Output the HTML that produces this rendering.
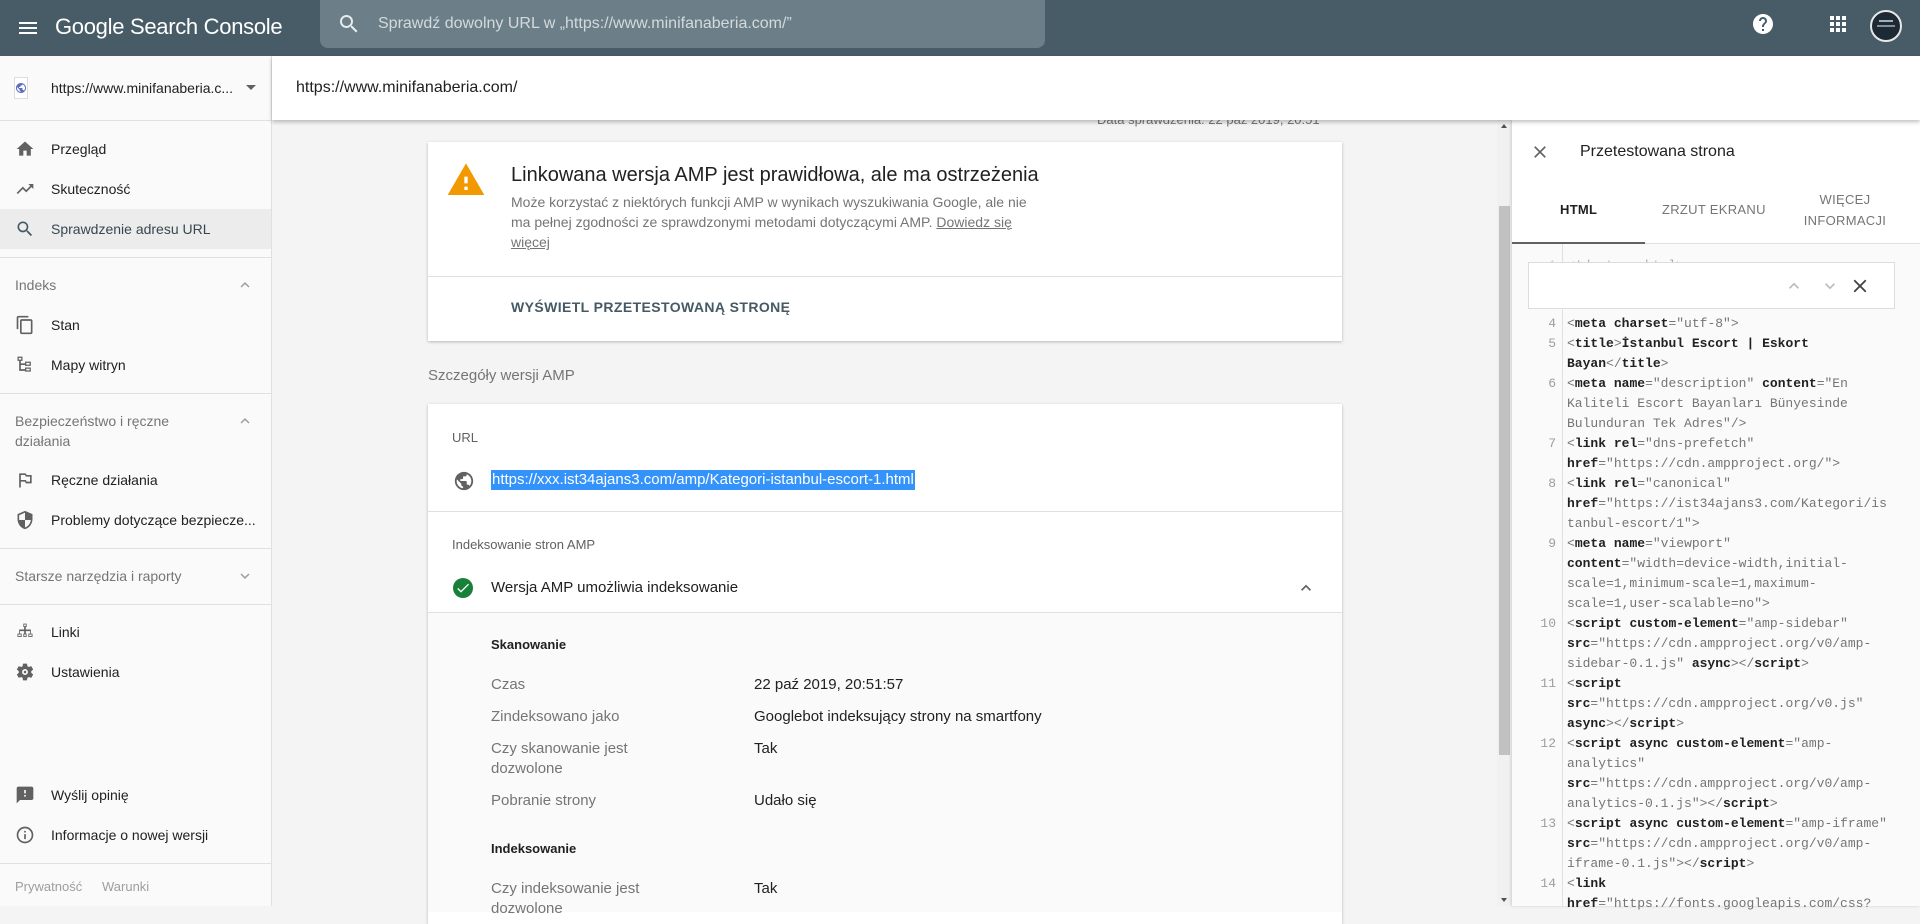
<!DOCTYPE html>
<html><head><meta charset="utf-8"><style>
*{margin:0;padding:0;box-sizing:border-box}
body{width:1920px;height:906px;overflow:hidden;position:relative;background:#f4f4f4;font-family:"Liberation Sans",Arial,sans-serif;color:#212121}
.a{position:absolute}
.t{position:absolute;white-space:nowrap;line-height:20px}
svg.i{position:absolute;width:20px;height:20px;fill:#616161}
.nav{font-size:14px;color:#212121;left:51px}
.div{position:absolute;left:0;width:271px;height:1px;background:#e0e0e0}
.code{position:absolute;left:1567px;font-family:"Liberation Mono",monospace;font-size:13px;color:#757575;white-space:pre;line-height:20px}
.code b{color:#212121}
.ln{position:absolute;left:1530px;width:26px;text-align:right;font-family:"Liberation Mono",monospace;font-size:13px;color:#9e9e9e;line-height:20px}
.lbl{color:#757575;font-size:15px;left:491px}
.val{color:#212121;font-size:15px;left:754px}
</style></head><body>

<!-- top bar -->
<div class="a" style="left:0;top:0;width:1920px;height:56px;background:#485c67"></div>
<svg class="i" viewBox="0 0 24 24" style="left:16px;top:16px;width:24px;height:24px;fill:#fff"><path d="M3 18h18v-2H3v2zm0-5h18v-2H3v2zm0-7v2h18V6H3z"/></svg>
<div class="t" style="left:55px;top:13px;font-size:22px;line-height:28px;color:#fff;letter-spacing:-0.3px">Google Search Console</div>
<div class="a" style="left:320px;top:0;width:725px;height:48px;background:#6c7f89;border-radius:0 0 8px 8px"></div>
<svg class="i" viewBox="0 0 24 24" style="left:337px;top:12px;width:24px;height:24px;fill:#e8ecee"><path d="M15.5 14h-.79l-.28-.27A6.471 6.471 0 0 0 16 9.5 6.5 6.5 0 1 0 9.5 16c1.61 0 3.09-.59 4.23-1.57l.27.28v.79l5 4.99L20.49 19l-4.99-5zm-6 0C7.01 14 5 11.99 5 9.5S7.01 5 9.5 5 14 7.01 14 9.5 11.99 14 9.5 14z"/></svg>
<div class="t" style="left:378px;top:14px;font-size:16px;color:#d3dadd">Sprawdź dowolny URL w „https://www.minifanaberia.com/”</div>
<svg class="i" viewBox="0 0 24 24" style="left:1751px;top:12px;width:24px;height:24px;fill:#fff"><path d="M12 2C6.48 2 2 6.48 2 12s4.48 10 10 10 10-4.48 10-10S17.52 2 12 2zm1 17h-2v-2h2v2zm2.07-7.75l-.9.92C13.45 12.9 13 13.5 13 15h-2v-.5c0-1.1.45-2.1 1.17-2.83l1.24-1.26c.37-.36.59-.86.59-1.41 0-1.1-.9-2-2-2s-2 .9-2 2H8c0-2.21 1.79-4 4-4s4 1.79 4 4c0 .88-.36 1.68-.93 2.25z"/></svg>
<svg class="i" viewBox="0 0 24 24" style="left:1826px;top:12px;width:24px;height:24px;fill:#fff"><path d="M4 8h4V4H4v4zm6 12h4v-4h-4v4zm-6 0h4v-4H4v4zm0-6h4v-4H4v4zm6 0h4v-4h-4v4zm6-10v4h4V4h-4zm-6 4h4V4h-4v4zm6 6h4v-4h-4v4zm0 6h4v-4h-4v4z"/></svg>
<div class="a" style="left:1870px;top:10px;width:32px;height:32px;border-radius:50%;background:#1d2a35;border:2px solid #e8e8e8"></div>
<div class="a" style="left:1879px;top:20px;width:14px;height:2px;background:#9fb0b8"></div>
<div class="a" style="left:1877px;top:25px;width:18px;height:2px;background:#7f9099"></div>

<!-- sidebar -->
<div class="a" style="left:0;top:56px;width:272px;height:850px;background:#fafafa;border-right:1px solid #e0e0e0"></div>
<div class="a" style="left:14px;top:77px;width:14px;height:22px;border:1px solid #ddd;background:#fff"></div>
<svg class="a" viewBox="0 0 24 24" style="left:15px;top:82px;width:12px;height:12px;fill:#5c6bc0"><path d="M12 2C6.48 2 2 6.48 2 12s4.48 10 10 10 10-4.48 10-10S17.52 2 12 2zm-1 17.93c-3.95-.49-7-3.85-7-7.93 0-.62.08-1.21.21-1.79L9 15v1c0 1.1.9 2 2 2v1.93zm6.9-2.54c-.26-.81-1-1.39-1.9-1.39h-1v-3c0-.55-.45-1-1-1H8v-2h2c.55 0 1-.45 1-1V7h2c1.1 0 2-.9 2-2v-.41c2.93 1.19 5 4.06 5 7.41 0 2.08-.8 3.97-2.1 5.39z"/></svg>
<div class="t nav" style="top:78px;font-size:14px">https://www.minifanaberia.c...</div>
<div class="a" style="left:246px;top:85px;width:0;height:0;border-left:5px solid transparent;border-right:5px solid transparent;border-top:5px solid #616161"></div>
<div class="div" style="top:120px"></div>

<svg class="i" viewBox="0 0 24 24" style="left:15px;top:139px"><path d="M10 20v-6h4v6h5v-8h3L12 3 2 12h3v8z"/></svg>
<div class="t nav" style="top:139px">Przegląd</div>
<svg class="i" viewBox="0 0 24 24" style="left:15px;top:179px"><path d="M16 6l2.29 2.29-4.88 4.88-4-4L2 16.59 3.41 18l6-6 4 4 6.3-6.29L22 12V6z"/></svg>
<div class="t nav" style="top:179px">Skuteczność</div>
<div class="a" style="left:0;top:209px;width:271px;height:40px;background:#ececec"></div>
<svg class="i" viewBox="0 0 24 24" style="left:15px;top:219px;fill:#455a64"><path d="M15.5 14h-.79l-.28-.27A6.471 6.471 0 0 0 16 9.5 6.5 6.5 0 1 0 9.5 16c1.61 0 3.09-.59 4.23-1.57l.27.28v.79l5 4.99L20.49 19l-4.99-5zm-6 0C7.01 14 5 11.99 5 9.5S7.01 5 9.5 5 14 7.01 14 9.5 11.99 14 9.5 14z"/></svg>
<div class="t nav" style="top:219px;color:#37474f">Sprawdzenie adresu URL</div>
<div class="div" style="top:257px"></div>
<div class="t" style="left:15px;top:275px;font-size:14px;color:#757575">Indeks</div>
<svg class="i" viewBox="0 0 24 24" style="left:236px;top:276px;width:18px;height:18px;fill:#9e9e9e"><path d="M12 8l-6 6 1.41 1.41L12 10.83l4.59 4.58L18 14z"/></svg>
<svg class="i" viewBox="0 0 24 24" style="left:15px;top:315px"><path d="M16 1H4c-1.1 0-2 .9-2 2v14h2V3h12V1zm3 4H8c-1.1 0-2 .9-2 2v14c0 1.1.9 2 2 2h11c1.1 0 2-.9 2-2V7c0-1.1-.9-2-2-2zm0 16H8V7h11v14z"/></svg>
<div class="t nav" style="top:315px">Stan</div>
<svg class="i" viewBox="0 0 24 24" style="left:15px;top:355px"><path d="M3 2h6v5H7v3h5V8h7v5h-7v-1H7v5h5v-2h7v5h-7v-1H5V7H3zM4.5 3.5v2h3v-2zm9 6v2h4v-2zm0 7v2h4v-2z"/></svg>
<div class="t nav" style="top:355px">Mapy witryn</div>
<div class="div" style="top:393px"></div>
<div class="t" style="left:15px;top:411px;font-size:14px;color:#757575">Bezpieczeństwo i ręczne</div>
<div class="t" style="left:15px;top:431px;font-size:14px;color:#757575">działania</div>
<svg class="i" viewBox="0 0 24 24" style="left:236px;top:412px;width:18px;height:18px;fill:#9e9e9e"><path d="M12 8l-6 6 1.41 1.41L12 10.83l4.59 4.58L18 14z"/></svg>
<svg class="i" viewBox="0 0 24 24" style="left:15px;top:470px"><path d="M14 6l-1-2H5v17h2v-7h5l1 2h7V6h-6zm4 8h-4l-1-2H7V6h5l1 2h5v6z"/></svg>
<div class="t nav" style="top:470px">Ręczne działania</div>
<svg class="i" viewBox="0 0 24 24" style="left:15px;top:510px"><path d="M12 1L3 5v6c0 5.55 3.84 10.74 9 12 5.16-1.26 9-6.45 9-12V5l-9-4zm0 10.99h7c-.53 4.12-3.28 7.79-7 8.94V12H5V6.3l7-3.11v8.8z"/></svg>
<div class="t nav" style="top:510px">Problemy dotyczące bezpiecze...</div>
<div class="div" style="top:548px"></div>
<div class="t" style="left:15px;top:566px;font-size:14px;color:#757575">Starsze narzędzia i raporty</div>
<svg class="i" viewBox="0 0 24 24" style="left:236px;top:567px;width:18px;height:18px;fill:#9e9e9e"><path d="M16.59 8.59L12 13.17 7.41 8.59 6 10l6 6 6-6z"/></svg>
<div class="div" style="top:604px"></div>
<svg class="i" viewBox="0 0 24 24" style="left:15px;top:622px"><path d="M10 2h4v4h-1v3h6v5h2v4h-5v-4h2v-3h-5v3h1v4h-4v-4h1v-3H6v3h2v4H3v-4h2V9h6V6h-1zm1 1v2h2V3zM4 15v2h3v-2zm7 0v2h2v-2zm6 0v2h3v-2z"/></svg>
<div class="t nav" style="top:622px">Linki</div>
<svg class="i" viewBox="0 0 24 24" style="left:15px;top:662px"><path d="M19.43 12.98c.04-.32.07-.64.07-.98s-.03-.66-.07-.98l2.110-1.65c.19-.15.24-.42.12-.64l-2-3.46c-.12-.22-.39-.3-.61-.22l-2.49 1c-.52-.4-1.08-.73-1.69-.98l-.38-2.65A.49.49 0 0 0 14 2h-4c-.25 0-.46.18-.49.42l-.38 2.65c-.61.25-1.17.59-1.69.98l-2.49-1a.49.49 0 0 0-.61.22l-2 3.46c-.13.22-.07.49.12.64l2.11 1.65c-.04.32-.07.65-.07.98s.03.66.07.98l-2.11 1.65c-.19.15-.24.42-.12.64l2 3.46c.12.22.39.3.61.22l2.49-1c.52.4 1.08.73 1.69.98l.38 2.65c.03.24.24.42.49.42h4c.25 0 .46-.18.49-.42l.38-2.65c.61-.25 1.17-.59 1.69-.98l2.49 1c.23.09.49 0 .61-.22l2-3.46c.12-.22.07-.49-.12-.64l-2.11-1.65zM12 15.5c-1.93 0-3.5-1.57-3.5-3.5s1.57-3.5 3.5-3.5 3.5 1.57 3.5 3.5-1.57 3.5-3.5 3.5zm0-5a1.5 1.5 0 1 0 0 3 1.5 1.5 0 0 0 0-3z"/></svg>
<div class="t nav" style="top:662px">Ustawienia</div>
<svg class="i" viewBox="0 0 24 24" style="left:15px;top:785px"><path d="M20 2H4c-1.1 0-1.99.9-1.99 2L2 22l4-4h14c1.1 0 2-.9 2-2V4c0-1.1-.9-2-2-2zm-7 12h-2v-2h2v2zm0-4h-2V6h2v4z"/></svg>
<div class="t nav" style="top:785px">Wyślij opinię</div>
<svg class="i" viewBox="0 0 24 24" style="left:15px;top:825px"><path d="M11 7h2v2h-2zm0 4h2v6h-2zm1-9C6.48 2 2 6.48 2 12s4.48 10 10 10 10-4.48 10-10S17.52 2 12 2zm0 18c-4.41 0-8-3.590-8-8s3.59-8 8-8 8 3.59 8 8-3.59 8-8 8z"/></svg>
<div class="t nav" style="top:825px">Informacje o nowej wersji</div>
<div class="div" style="top:863px"></div>
<div class="t" style="left:15px;top:877px;font-size:13px;color:#9e9e9e">Prywatność</div>
<div class="t" style="left:102px;top:877px;font-size:13px;color:#9e9e9e">Warunki</div>

<!-- main -->
<div class="t" style="left:1097px;top:110px;font-size:13px;color:#757575">Data sprawdzenia: 22 paź 2019, 20:51</div>
<div class="a" style="left:272px;top:56px;width:1648px;height:64px;background:#fff;box-shadow:0 2px 4px rgba(0,0,0,.25);z-index:2"></div>
<div class="t" style="left:296px;top:78px;font-size:16px;color:#212121;z-index:3">https://www.minifanaberia.com/</div>

<div class="a" style="left:428px;top:142px;width:914px;height:199px;background:#fff;box-shadow:0 1px 3px rgba(0,0,0,.25)"></div>
<svg class="i" viewBox="0 0 24 24" style="left:446px;top:160px;width:40px;height:40px;fill:#f29900"><path d="M1 21h22L12 2 1 21zm12-3h-2v-2h2v2zm0-4h-2v-4h2v4z"/></svg>
<div class="t" style="left:511px;top:162px;font-size:20px;line-height:26px;color:#212121">Linkowana wersja AMP jest prawidłowa, ale ma ostrzeżenia</div>
<div class="a" style="left:511px;top:192px;width:530px;font-size:14px;line-height:20px;color:#757575">Może korzystać z niektórych funkcji AMP w wynikach wyszukiwania Google, ale nie ma pełnej zgodności ze sprawdzonymi metodami dotyczącymi AMP. <u>Dowiedz się więcej</u></div>
<div class="a" style="left:428px;top:276px;width:914px;height:1px;background:#e0e0e0"></div>
<div class="t" style="left:511px;top:297px;font-size:14px;font-weight:bold;color:#455a64;letter-spacing:.4px">WYŚWIETL PRZETESTOWANĄ STRONĘ</div>

<div class="t" style="left:428px;top:366px;font-size:15px;color:#757575">Szczegóły wersji AMP</div>

<div class="a" style="left:428px;top:404px;width:914px;height:520px;background:#fff;box-shadow:0 1px 3px rgba(0,0,0,.25)"></div>
<div class="t" style="left:452px;top:428px;font-size:13px;color:#616161">URL</div>
<svg class="i" viewBox="0 0 24 24" style="left:453px;top:470px;width:22px;height:22px"><path d="M12 2C6.48 2 2 6.48 2 12s4.48 10 10 10 10-4.48 10-10S17.52 2 12 2zm-1 17.93c-3.95-.49-7-3.85-7-7.930 0-.62.08-1.21.21-1.79L9 15v1c0 1.1.9 2 2 2v1.93zm6.9-2.54c-.26-.81-1-1.39-1.9-1.39h-1v-3c0-.55-.45-1-1-1H8v-2h2c.55 0 1-.45 1-1V7h2c1.1 0 2-.9 2-2v-.41c2.93 1.19 5 4.06 5 7.41 0 2.08-.8 3.97-2.1 5.39z"/></svg>
<div class="t" style="left:491px;top:470px;height:20px;font-size:15px;color:#fff;background:#3393fb;padding:0 1px">https://xxx.ist34ajans3.com/amp/Kategori-istanbul-escort-1.html</div>
<div class="a" style="left:428px;top:511px;width:914px;height:1px;background:#e0e0e0"></div>
<div class="t" style="left:452px;top:535px;font-size:13px;color:#616161">Indeksowanie stron AMP</div>
<div class="a" style="left:453px;top:578px;width:20px;height:20px;border-radius:50%;background:#188038"></div>
<svg class="a" viewBox="0 0 24 24" style="left:455px;top:580px;width:16px;height:16px;fill:#fff"><path d="M9 16.17L4.83 12l-1.42 1.41L9 19 21 7l-1.41-1.41z"/></svg>
<div class="t" style="left:491px;top:578px;font-size:15px;color:#212121">Wersja AMP umożliwia indeksowanie</div>
<svg class="i" viewBox="0 0 24 24" style="left:1296px;top:578px;width:20px;height:20px;fill:#616161"><path d="M12 8l-6 6 1.41 1.41L12 10.83l4.59 4.58L18 14z"/></svg>
<div class="a" style="left:428px;top:612px;width:914px;height:300px;background:#fafafa;border-top:1px solid #e0e0e0"></div>
<div class="t" style="left:491px;top:635px;font-size:13px;font-weight:bold;color:#212121">Skanowanie</div>
<div class="t lbl" style="top:675px">Czas</div><div class="t val" style="top:675px">22 paź 2019, 20:51:57</div>
<div class="t lbl" style="top:707px">Zindeksowano jako</div><div class="t val" style="top:707px">Googlebot indeksujący strony na smartfony</div>
<div class="t lbl" style="top:739px">Czy skanowanie jest</div><div class="t lbl" style="top:759px">dozwolone</div><div class="t val" style="top:739px">Tak</div>
<div class="t lbl" style="top:791px">Pobranie strony</div><div class="t val" style="top:791px">Udało się</div>
<div class="t" style="left:491px;top:839px;font-size:13px;font-weight:bold;color:#212121">Indeksowanie</div>
<div class="t lbl" style="top:879px">Czy indeksowanie jest</div><div class="t val" style="top:879px">Tak</div>
<div class="t lbl" style="top:899px">dozwolone</div>

<!-- scrollbar -->
<div class="a" style="left:1497px;top:120px;width:15px;height:786px;background:#f1f1f1"></div>
<div class="a" style="left:1499px;top:206px;width:11px;height:549px;background:#c1c1c1"></div>
<div class="a" style="left:1501px;top:124px;border-left:3.5px solid transparent;border-right:3.5px solid transparent;border-bottom:4px solid #505050"></div>
<div class="a" style="left:1501px;top:898px;border-left:3.5px solid transparent;border-right:3.5px solid transparent;border-top:4px solid #505050"></div>

<!-- right panel -->
<div class="a" style="left:1512px;top:120px;width:408px;height:786px;background:#fff;box-shadow:-1px 0 3px rgba(0,0,0,.15)"></div>
<svg class="a" viewBox="0 0 24 24" style="left:1530px;top:142px;width:20px;height:20px;fill:#616161"><path d="M19 6.41L17.59 5 12 10.59 6.41 5 5 6.41 10.59 12 5 17.59 6.41 19 12 13.41 17.59 19 19 17.59 13.41 12z"/></svg>
<div class="t" style="left:1580px;top:142px;font-size:16px;color:#212121">Przetestowana strona</div>
<div class="t" style="left:1560px;top:200px;font-size:13px;font-weight:bold;color:#212121;letter-spacing:.3px">HTML</div>
<div class="t" style="left:1662px;top:200px;font-size:13px;color:#757575;letter-spacing:.3px">ZRZUT EKRANU</div>
<div class="a" style="left:1800px;top:189px;width:90px;text-align:center;font-size:13px;line-height:21px;color:#757575;letter-spacing:.3px">WIĘCEJ<br>INFORMACJI</div>
<div class="a" style="left:1512px;top:243px;width:408px;height:1px;background:#e0e0e0"></div>
<div class="a" style="left:1512px;top:242px;width:133px;height:2px;background:#616161"></div>
<div class="a" style="left:1512px;top:244px;width:408px;height:662px;background:#fafafa"></div>
<div class="a" style="left:1562px;top:244px;width:1px;height:662px;background:#e0e0e0"></div>

<div class="ln" style="top:256px;color:#ccc">1</div><div class="code" style="top:256px;color:#aaa">&lt;!doctype html&gt;</div>
<div class="a" style="left:1528px;top:262px;width:367px;height:47px;background:#fff;border:1px solid #ddd"></div>
<svg class="a" viewBox="0 0 24 24" style="left:1784px;top:276px;width:20px;height:20px;fill:#bdbdbd"><path d="M12 8l-6 6 1.41 1.41L12 10.83l4.59 4.58L18 14z"/></svg>
<svg class="a" viewBox="0 0 24 24" style="left:1820px;top:276px;width:20px;height:20px;fill:#bdbdbd"><path d="M16.59 8.59L12 13.17 7.41 8.59 6 10l6 6 6-6z"/></svg>
<svg class="a" viewBox="0 0 24 24" style="left:1849px;top:275px;width:22px;height:22px;fill:#424242"><path d="M19 6.41L17.59 5 12 10.59 6.41 5 5 6.41 10.59 12 5 17.59 6.41 19 12 13.41 17.59 19 19 17.59 13.41 12z"/></svg>

<div class="ln" style="top:314px">4</div>
<div class="ln" style="top:334px">5</div>
<div class="ln" style="top:374px">6</div>
<div class="ln" style="top:434px">7</div>
<div class="ln" style="top:474px">8</div>
<div class="ln" style="top:534px">9</div>
<div class="ln" style="top:614px">10</div>
<div class="ln" style="top:674px">11</div>
<div class="ln" style="top:734px">12</div>
<div class="ln" style="top:814px">13</div>
<div class="ln" style="top:874px">14</div>
<div class="code" style="top:314px">&lt;<b>meta</b> <b>charset</b>="utf-8"&gt;
&lt;<b>title</b>&gt;<b>İstanbul Escort | Eskort</b>
<b>Bayan</b>&lt;/<b>title</b>&gt;
&lt;<b>meta</b> <b>name</b>="description" <b>content</b>="En
Kaliteli Escort Bayanları Bünyesinde
Bulunduran Tek Adres"/&gt;
&lt;<b>link</b> <b>rel</b>="dns-prefetch"
<b>href</b>="https://cdn.ampproject.org/"&gt;
&lt;<b>link</b> <b>rel</b>="canonical"
<b>href</b>="https://ist34ajans3.com/Kategori/is
tanbul-escort/1"&gt;
&lt;<b>meta</b> <b>name</b>="viewport"
<b>content</b>="width=device-width,initial-
scale=1,minimum-scale=1,maximum-
scale=1,user-scalable=no"&gt;
&lt;<b>script</b> <b>custom-element</b>="amp-sidebar"
<b>src</b>="https://cdn.ampproject.org/v0/amp-
sidebar-0.1.js" <b>async</b>&gt;&lt;/<b>script</b>&gt;
&lt;<b>script</b>
<b>src</b>="https://cdn.ampproject.org/v0.js"
<b>async</b>&gt;&lt;/<b>script</b>&gt;
&lt;<b>script</b> <b>async</b> <b>custom-element</b>="amp-
analytics"
<b>src</b>="https://cdn.ampproject.org/v0/amp-
analytics-0.1.js"&gt;&lt;/<b>script</b>&gt;
&lt;<b>script</b> <b>async</b> <b>custom-element</b>="amp-iframe"
<b>src</b>="https://cdn.ampproject.org/v0/amp-
iframe-0.1.js"&gt;&lt;/<b>script</b>&gt;
&lt;<b>link</b>
<b>href</b>="https://fonts.googleapis.com/css?</div>
</body></html>
